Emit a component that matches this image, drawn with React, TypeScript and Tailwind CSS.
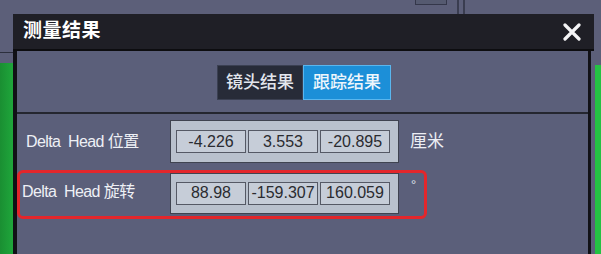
const pos = ["-4.226", "3.553", "-20.895"];
const rot = ["88.98", "-159.307", "160.059"];

const ValueGroup = ({ values, tall }: { values: string[]; tall?: boolean }) => {
  return (
    <div
      className={
        "w-[229px] flex items-center gap-[2px] pl-[5px] bg-[#b9c1cd] border border-[#3f4350] " +
        (tall ? "h-[43px]" : "h-[41px] pb-[1px]")
      }
    >
      {values.map((v) => (
        <div
          key={v}
          className="w-[70px] h-[23px] flex items-center justify-center bg-[#c6cdd8] border border-[#555965] text-[16px] text-[#2a2b30] leading-none"
        >
          {v}
        </div>
      ))}
    </div>
  );
};

const CloseIcon = () => (
  <svg width="18" height="18" viewBox="0 0 18 18">
    <path d="M2 2 L16 16 M16 2 L2 16" stroke="#f4f4f6" strokeWidth="3.2" strokeLinecap="round" />
  </svg>
);

export default function App() {
  return (
    <div className="w-[601px] h-[254px] bg-[#5c5f79] flex flex-col overflow-hidden font-['Liberation_Sans','Noto_Sans_CJK_SC',sans-serif]">
      {/* strip above the dialog */}
      <div className="h-[14px] flex shrink-0">
        <div className="w-[415px]" />
        <div className="w-[32px] h-[5px] border border-t-0 border-[#34374a] bg-[#555a70]" />
        <div className="w-[10px]" />
        <div className="w-[2px] bg-[#3a3d50]" />
        <div className="w-[4px]" />
        <div className="w-[2px] bg-[#3a3d50]" />
        <div className="flex-1" />
      </div>

      <div className="flex flex-1">
        {/* left edge */}
        <div className="w-[13px] flex flex-col">
          <div className="h-[38px]" />
          <div className="h-[1px] bg-[#2c2f3d]" />
          <div className="h-[10px]" />
          <div className="flex-1 bg-gradient-to-r from-[#1a8f32] to-[#1fa63b]" />
        </div>

        {/* dialog */}
        <div className="w-[581px] flex flex-col">
          <div className="h-[35px] bg-[#1f1f26] flex items-center justify-between pl-[10px] pr-[13px]">
            <span className="text-[19px] font-bold text-white tracking-[0.5px]">测量结果</span>
            <CloseIcon />
          </div>
          <div className="h-[2px] bg-[#0d0d10]" />

          <div className="flex flex-1 pr-[3px]">
            <div className="flex-1 flex flex-col bg-[#5b5f7a] border-l-4 border-r-[3px] border-[#111116]">
              {/* tabs */}
              <div className="flex justify-center pl-[3px] pt-[14px]">
                <div className="w-[86px] h-[35px] flex items-center justify-center bg-[#272b38] border border-[#3b4052] text-[17px] font-medium text-[#e3e6ee]">
                  镜头结果
                </div>
                <div className="w-[88px] h-[35px] flex items-center justify-center bg-[#1c8fd8] border border-[#5ab6ee] text-[17px] font-medium text-[#eef6fc]">
                  跟踪结果
                </div>
              </div>
              <div className="h-[2px] mt-[12px] bg-[#24262f]" />

              {/* position */}
              <div className="flex items-center mt-[6px] pl-[9px]">
                <div className="w-[144px] text-[16px] tracking-[-0.6px] text-[#eef0f5] whitespace-pre">
                  Delta  Head 位置
                </div>
                <ValueGroup values={pos} tall />
                <span className="ml-[11px] text-[17px] text-[#eceef4]">厘米</span>
              </div>

              {/* rotation, outlined */}
              <div className="mt-[7px] w-[410px] h-[49px] flex items-start border-[3px] border-[#e3262b] rounded-[6px] pl-[2px]">
                <div className="w-[148px] mt-[7px] text-[16px] tracking-[-0.6px] text-[#eef0f5] whitespace-pre">
                  Delta  Head 旋转
                </div>
                <ValueGroup values={rot} />
                <span className="ml-[12px] mt-[2px] text-[13px] text-[#dfe2ea]">°</span>
              </div>
            </div>
          </div>
        </div>

        {/* right edge */}
        <div className="flex-1 flex flex-col">
          <div className="h-[51px]" />
          <div className="flex-1 ml-[1px] bg-[#24c243]" />
        </div>
      </div>
    </div>
  );
}
